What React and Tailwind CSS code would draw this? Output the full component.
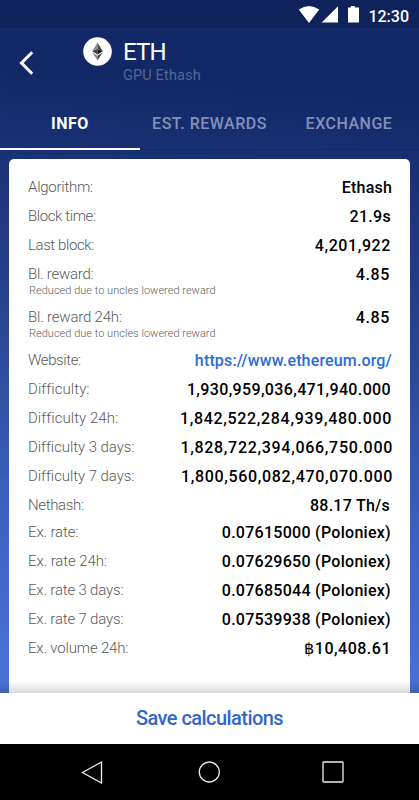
const ROWS = [
  { label: "Algorithm:", value: "Ethash", labelClass: "tracking-[-0.25px]", valueClass: "mr-0 tracking-[0.2px]" },
  { label: "Block time:", value: "21.9s", labelClass: "tracking-[-0.4px]", valueClass: "mr-px tracking-[0.3px]" },
  { label: "Last block:", value: "4,201,922", labelClass: "tracking-[-0.4px]", valueClass: "mr-px tracking-[0.6px]" },
  { label: "Bl. reward:", note: "Reduced due to uncles lowered reward", value: "4.85", labelClass: "tracking-[-0.25px]", valueClass: "mr-[2px] tracking-[0.6px]" },
  { label: "Bl. reward 24h:", note: "Reduced due to uncles lowered reward", value: "4.85", labelClass: "tracking-[-0.2px]", valueClass: "mr-[2px] tracking-[0.6px]" },
  { label: "Website:", value: "https://www.ethereum.org/", link: true, labelClass: "tracking-[-0.4px]", valueClass: "mr-0 tracking-[0.15px]" },
  { label: "Difficulty:", value: "1,930,959,036,471,940.000", labelClass: "tracking-[0.05px]", valueClass: "mr-px tracking-[0.36px]" },
  { label: "Difficulty 24h:", value: "1,842,522,284,939,480.000", labelClass: "tracking-[0.04px]", valueClass: "mr-0 tracking-[0.68px]" },
  { label: "Difficulty 3 days:", value: "1,828,722,394,066,750.000", labelClass: "tracking-[-0.07px]", valueClass: "mr-[-1px] tracking-[0.7px]" },
  { label: "Difficulty 7 days:", value: "1,800,560,082,470,070.000", labelClass: "tracking-[-0.07px]", valueClass: "mr-[-1px] tracking-[0.68px]" },
  { label: "Nethash:", value: "88.17 Th/s", short: true, labelClass: "tracking-[-0.35px]", valueClass: "mr-[2px] tracking-[0.25px]" },
  { label: "Ex. rate:", value: "0.07615000 (Poloniex)", labelClass: "tracking-[-0.15px]", valueClass: "mr-px tracking-[0.28px]" },
  { label: "Ex. rate 24h:", value: "0.07629650 (Poloniex)", labelClass: "tracking-[-0.1px]", valueClass: "mr-px tracking-[0.28px]" },
  { label: "Ex. rate 3 days:", value: "0.07685044 (Poloniex)", labelClass: "tracking-[-0.18px]", valueClass: "mr-px tracking-[0.28px]" },
  { label: "Ex. rate 7 days:", value: "0.07539938 (Poloniex)", labelClass: "tracking-[-0.18px]", valueClass: "mr-px tracking-[0.28px]" },
  { label: "Ex. volume 24h:", value: "฿10,408.61", labelClass: "tracking-[-0.18px]", valueClass: "mr-px tracking-[0.5px]" },
];

function InfoRow({ row }) {
  const height = row.note ? "h-[43px]" : row.short ? "h-[27px]" : "h-[29px]";
  return (
    <div className={`flex shrink-0 justify-between whitespace-nowrap ${height}`}>
      <div>
        <p className={`text-[15px] leading-[29px] font-light text-[#5a5a5a] ${row.labelClass}`}>{row.label}</p>
        {row.note && (
          <p className="-mt-[5px] ml-px text-[11px] leading-[14px] font-light tracking-[0.02px] text-[#606060]">{row.note}</p>
        )}
      </div>
      {row.link ? (
        <a className={`text-[16px] leading-[29px] font-medium text-[#2a6bd8] ${row.valueClass}`}>{row.value}</a>
      ) : (
        <p className={`text-[16px] leading-[29px] font-medium text-black ${row.valueClass}`}>{row.value}</p>
      )}
    </div>
  );
}

export default function App() {
  return (
    <div className="flex h-[800px] w-[419px] flex-col overflow-hidden bg-[linear-gradient(184deg,#122866_0px,#122866_95px,#1b3379_200px,#29458f_345px,#3a5fbb_520px,#4971d4_693px)] font-[Roboto,'Liberation_Sans',sans-serif]">
      {/* Status bar */}
      <div className="flex h-7 shrink-0 items-center justify-end bg-[#10225b] pr-[10px] text-white">
        <svg className="h-[18px] w-[63px]" viewBox="0 0 63 18" fill="currentColor">
          <path d="M0.8 4.6 Q11 -2.8 21.2 4.6 L11 18 Z" />
          <path d="M40 1.2V17.5H23.7Z" />
          <path d="M52.8 1h4v1.5H61V17.5H50V2.5h2.8z" />
        </svg>
        <span className="mt-[5px] ml-[7px] text-[16px] leading-none font-medium">12:30</span>
      </div>

      {/* Header */}
      <header className="flex h-[67px] shrink-0 pl-[19px]">
        <svg className="mt-[23px] h-[24px] w-[15px] text-white" viewBox="0 0 15 24" fill="none" stroke="currentColor" strokeWidth="3">
          <path d="M13.2 1.2L2.5 12l10.700 10.800" />
        </svg>
        <svg className="mt-[9px] ml-[49px] size-[29px]" viewBox="0 0 29 29">
          <circle cx="14.500" cy="14.500" r="14.300" fill="#fff" />
          <path d="M14.500 5.400L9.200 14.300l5.300-2.400z" fill="#8c8c8c" />
          <path d="M14.500 5.400l5.300 8.900-5.300-2.400z" fill="#4c4c4c" />
          <path d="M9.200 14.300l5.300-2.400v5.500z" fill="#404040" />
          <path d="M19.800 14.300l-5.300-2.400v5.500z" fill="#161616" />
          <path d="M9.200 15.500l5.300 3.200v4.500z" fill="#858585" />
          <path d="M19.800 15.500l-5.300 3.200v4.500z" fill="#444" />
        </svg>
        <div className="mt-[9px] ml-[11px]">
          <h1 className="text-[24px] leading-[31px] tracking-[-0.8px] text-white">ETH</h1>
          <p className="mt-px text-[14.500px] leading-[14px] tracking-[0.15px] text-[#556597]">GPU Ethash</p>
        </div>
      </header>

      {/* Tabs */}
      <nav className="flex h-[55px] shrink-0 border-b border-[#14275f] text-center text-[16px] leading-[57px] font-medium whitespace-nowrap text-[#8290b8]">
        <div className="h-[55px] w-[140px] border-b-2 border-white font-bold tracking-[0.5px] text-white">INFO</div>
        <div className="w-[139px] tracking-[0.5px]">EST. REWARDS</div>
        <div className="w-[140px] tracking-[0.5px]">EXCHANGE</div>
      </nav>

      {/* Info card */}
      <main className="flex min-h-0 flex-1 flex-col px-[9px] pt-[9px]">
        <div className="flex min-h-0 flex-1 flex-col rounded-t-[5px] bg-white pt-[14px] pr-[18px] pl-[19px]">
          {ROWS.map((row) => (
            <InfoRow key={row.label} row={row} />
          ))}
        </div>
        <div className="-mx-[9px] -mt-[12px] h-[12px] shrink-0 bg-linear-to-b from-black/0 to-black/15" />
      </main>

      <button className="h-[51px] shrink-0 bg-white pb-[2px] text-[20px] font-medium tracking-[-0.55px] text-[#3266cc]">Save calculations</button>

      {/* Android navigation bar */}
      <div className="flex h-14 shrink-0 items-center bg-black pl-[81px] text-[#eee]">
        <svg className="size-[24px]" viewBox="0 0 24 24" fill="none" stroke="currentColor" strokeWidth="1.300">
          <path d="M1.500 12.500L20.500 2v21z" />
        </svg>
        <svg className="ml-[92px] size-[24px]" viewBox="0 0 24 24" fill="none" stroke="currentColor" strokeWidth="1.300">
          <circle cx="12.300" cy="12" r="10" />
        </svg>
        <svg className="ml-[100px] size-[24px]" viewBox="0 0 24 24" fill="none" stroke="currentColor" strokeWidth="1.300">
          <rect x="2" y="2" width="20" height="20" rx="0.500" />
        </svg>
      </div>
    </div>
  );
}
